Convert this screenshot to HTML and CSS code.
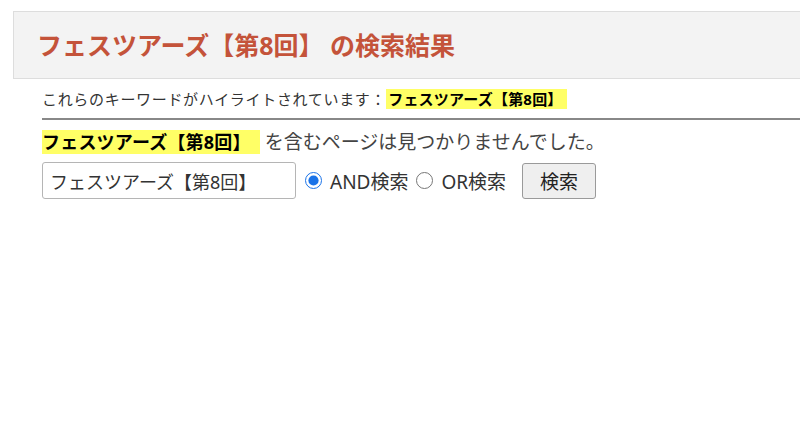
FILE: index.html
```html
<!DOCTYPE html>
<html lang="ja">
<head>
<meta charset="utf-8">
<link rel="stylesheet" href="styles.css">
</head>
<body>
<div class="header">
  <h1 class="title">フェスツアーズ【第8回】 の検索結果</h1>
</div>
<div class="content">
  <p class="keywords">これらのキーワードがハイライトされています：<span class="hl">フェスツアーズ【第8回】</span></p>
  <hr class="rule">
  <p class="notfound"><span class="hl hl-big">フェスツアーズ【第8回】</span> を含むページは見つかりませんでした。</p>
  <form class="search">
    <input class="query" type="text" value="フェスツアーズ【第8回】">
    <label class="opt"><input type="radio" name="t" checked><span>AND検索</span></label>
    <label class="opt"><input type="radio" name="t"><span>OR検索</span></label>
    <button class="btn" type="button">検索</button>
  </form>
</div>
</body>
</html>
```
FILE: styles.css
```css
html, body {
  margin: 0;
  padding: 0;
  background: #fff;
  font-family: "Noto Sans", "Noto Sans CJK JP", sans-serif;
  color: #333;
  overflow: hidden;
}
.header {
  margin: 11px 0 0 13px;
  height: 66px;
  background: #f3f3f3;
  border: 1px solid #dddddd;
  border-right: none;
  display: flex;
  align-items: center;
  padding-left: 23px;
}
.title {
  margin: 0;
  font-size: 25px;
  font-weight: bold;
  color: #c4533a;
  line-height: 1;
  padding-top: 1px;
}
.content {
  margin-left: 42px;
}
.keywords {
  margin: 10px 0 0;
  font-size: 15px;
  line-height: 20px;
  letter-spacing: 0.68px;
  color: #333;
}
.hl {
  background: #ffff66;
  font-weight: bold;
  color: #000;
  letter-spacing: 0.2px;
  padding: 0 4px 0 2px;
}
.rule {
  margin: 9px 0 0;
  border: none;
  border-top: 2px solid #888;
  height: 0;
}
.notfound {
  margin: 10px 0 0;
  font-size: 19px;
  line-height: 24px;
  color: #444;
}
.hl-big {
  font-size: 18px;
  padding: 0 9px 0 0;
}
.search {
  margin-top: 8px;
  display: flex;
  align-items: center;
}
.query {
  box-sizing: border-box;
  width: 254px;
  height: 37px;
  border: 1px solid #b5b5b5;
  border-radius: 3px;
  padding: 0 7px;
  font-family: "Noto Sans", "Noto Sans CJK JP", sans-serif;
  font-size: 18px;
  color: #333;
  margin: 0 9px 0 0;
}
.opt {
  display: flex;
  align-items: center;
  font-size: 19px;
  color: #333;
}
.opt input {
  width: 17px;
  height: 17px;
  margin: 0 8px 0 0;
  accent-color: #1a73e8;
}
.opt + .opt input {
  margin-left: 8px;
}
.btn {
  margin-left: 16px;
  width: 74px;
  height: 36px;
  background: #efefef;
  border: 1px solid #9a9a9a;
  border-radius: 3px;
  font-family: "Noto Sans", "Noto Sans CJK JP", sans-serif;
  font-size: 19px;
  color: #222;
}
```
